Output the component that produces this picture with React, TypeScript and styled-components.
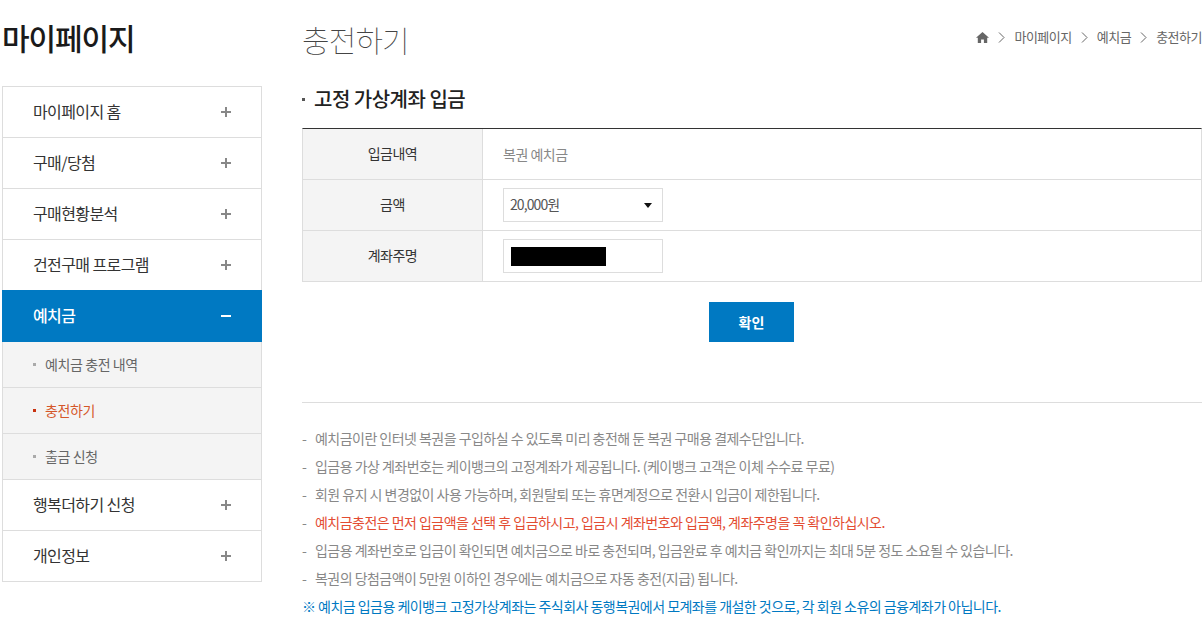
import React from "react";
import styled, { createGlobalStyle } from "styled-components";

const menuBefore = ["마이페이지 홈", "구매/당첨", "구매현황분석", "건전구매 프로그램"];
const menuAfter = ["행복더하기 신청", "개인정보"];

const notes = [
  { text: "예치금이란 인터넷 복권을 구입하실 수 있도록 미리 충전해 둔 복권 구매용 결제수단입니다." },
  { text: "입금용 가상 계좌번호는 케이뱅크의 고정계좌가 제공됩니다. (케이뱅크 고객은 이체 수수료 무료)" },
  { text: "회원 유지 시 변경없이 사용 가능하며, 회원탈퇴 또는 휴면계정으로 전환시 입금이 제한됩니다." },
  { text: "예치금충전은 먼저 입금액을 선택 후 입금하시고, 입금시 계좌번호와 입금액, 계좌주명을 꼭 확인하십시오.", warn: true },
  { text: "입금용 계좌번호로 입금이 확인되면 예치금으로 바로 충전되며, 입금완료 후 예치금 확인까지는 최대 5분 정도 소요될 수 있습니다." },
  { text: "복권의 당첨금액이 5만원 이하인 경우에는 예치금으로 자동 충전(지급) 됩니다." },
];

function Chevron() {
  return (
    <CrumbArrow width="7" height="11" viewBox="0 0 7 11">
      <path d="M1 0.5 L6 5.5 L1 10.5" fill="none" stroke="#666" strokeWidth="1" />
    </CrumbArrow>
  );
}

function App() {
  return (
    <>
      <GlobalStyle />
      <Page>
        <Sidebar>
          <SideTitle>마이페이지</SideTitle>
          <Menu>
            {menuBefore.map((m) => (
              <MenuItem key={m}>
                {m}
                <PlusIcon />
              </MenuItem>
            ))}
            <ActiveItem>
              예치금
              <Minus />
            </ActiveItem>
            <SubItem>예치금 충전 내역</SubItem>
            <SubItem $current>충전하기</SubItem>
            <SubItem>출금 신청</SubItem>
            {menuAfter.map((m) => (
              <MenuItem key={m}>
                {m}
                <PlusIcon />
              </MenuItem>
            ))}
          </Menu>
        </Sidebar>

        <Main>
          <TopRow>
            <PageTitle>충전하기</PageTitle>
            <Crumbs>
              <HomeIcon width="13" height="11" viewBox="0 0 13 11">
                <path d="M6.5 0 L13 5.8 L11.2 5.8 L11.2 11 L7.9 11 L7.9 7.4 L5.1 7.4 L5.1 11 L1.8 11 L1.8 5.8 L0 5.8 Z" fill="#666" />
              </HomeIcon>
              <Chevron />
              <span>마이페이지</span>
              <Chevron />
              <span>예치금</span>
              <Chevron />
              <span>충전하기</span>
            </Crumbs>
          </TopRow>

          <SectionTitle>고정 가상계좌 입금</SectionTitle>

          <FormTable>
            <Row>
              <Label>입금내역</Label>
              <Value>복권 예치금</Value>
            </Row>
            <Row>
              <Label>금액</Label>
              <Value>
                <SelectBox>
                  20,000원
                  <Caret />
                </SelectBox>
              </Value>
            </Row>
            <Row>
              <Label>계좌주명</Label>
              <Value>
                <InputBox>
                  <Redacted />
                </InputBox>
              </Value>
            </Row>
          </FormTable>

          <ButtonRow>
            <ConfirmButton type="button">확인</ConfirmButton>
          </ButtonRow>

          <Divider />

          <Notes>
            {notes.map((n) => (
              <Note key={n.text} $warn={n.warn}>
                {n.text}
              </Note>
            ))}
          </Notes>
          <BlueNote>※ 예치금 입금용 케이뱅크 고정가상계좌는 주식회사 동행복권에서 모계좌를 개설한 것으로, 각 회원 소유의 금융계좌가 아닙니다.</BlueNote>
        </Main>
      </Page>
    </>
  );
}

const GlobalStyle = createGlobalStyle`
  html, body {
    margin: 0;
    padding: 0;
    background: #fff;
    overflow: hidden;
  }
  body {
    font-family: "Noto Sans CJK KR", "Noto Sans", sans-serif;
    color: #333;
  }
`;

const Page = styled.div`
  display: flex;
  gap: 40px;
  width: 1200px;
  height: 627px;
  padding-left: 2px;
`;

const Sidebar = styled.aside`
  width: 260px;
  flex: none;
`;

const SideTitle = styled.h2`
  margin: 0;
  height: 86px;
  padding-top: 16px;
  box-sizing: border-box;
  font-size: 30px;
  line-height: 42px;
  font-weight: 500;
  letter-spacing: -1.1px;
  color: #1a1a1a;
`;

const Menu = styled.nav`
  border: 1px solid #ddd;
  border-bottom: 0;
  display: flex;
  flex-direction: column;
`;

const MenuItem = styled.div`
  height: 51px;
  box-sizing: border-box;
  border-bottom: 1px solid #ddd;
  padding: 0 30px 2px;
  display: flex;
  align-items: center;
  justify-content: space-between;
  font-size: 16px;
  letter-spacing: -0.6px;
  color: #333;
`;

const PlusIcon = styled.i`
  width: 10px;
  height: 10px;
  margin-top: 2px;
  background:
    linear-gradient(#888, #888) center / 10px 2px no-repeat,
    linear-gradient(#888, #888) center / 2px 10px no-repeat;
`;

const ActiveItem = styled.div`
  height: 52px;
  margin: -1px -1px 0;
  box-sizing: border-box;
  padding: 0 31px 2px;
  display: flex;
  align-items: center;
  justify-content: space-between;
  background: #0079c2;
  color: #fff;
  font-size: 16px;
  font-weight: 500;
  letter-spacing: -0.6px;
`;

const Minus = styled.i`
  width: 10px;
  height: 2px;
  margin-top: 2px;
  background: #fff;
`;

const SubItem = styled.div<{ $current?: boolean }>`
  height: 46px;
  box-sizing: border-box;
  border-bottom: 1px solid #ddd;
  background: #f4f4f4;
  padding: 0 0 2px 30px;
  display: flex;
  align-items: center;
  gap: 9px;
  font-size: 14px;
  letter-spacing: -0.4px;
  color: ${(p) => (p.$current ? "#d4572a" : "#666")};

  &::before {
    content: "";
    width: 3px;
    height: 3px;
    margin-top: 2px;
    background: ${(p) => (p.$current ? "#c8320f" : "#aaa")};
  }
`;

const Main = styled.main`
  width: 900px;
  flex: none;
`;

const TopRow = styled.div`
  display: flex;
  justify-content: space-between;
  height: 83px;
`;

const PageTitle = styled.h1`
  margin: 0;
  padding-top: 17px;
  font-size: 30px;
  line-height: 44px;
  font-weight: 100;
  letter-spacing: -0.9px;
  color: #444;
`;

const Crumbs = styled.div`
  display: flex;
  align-items: center;
  height: 74px;
  gap: 9px;
  font-size: 13px;
  letter-spacing: -0.5px;
  color: #666;

  span {
    margin-top: -2px;
  }
`;

const HomeIcon = styled.svg`
  flex: none;
`;

const CrumbArrow = styled.svg`
  flex: none;
`;

const SectionTitle = styled.h3`
  margin: 0;
  height: 45px;
  box-sizing: border-box;
  padding-left: 12px;
  position: relative;
  font-size: 20px;
  line-height: 32px;
  font-weight: 500;
  letter-spacing: -0.5px;
  color: #222;

  &::before {
    content: "";
    position: absolute;
    left: 0;
    top: 15px;
    width: 3px;
    height: 3px;
    background: #555;
  }
`;

const FormTable = styled.div`
  border-top: 1px solid #333;
  border-left: 1px solid #ddd;
  border-right: 1px solid #ddd;
`;

const Row = styled.div`
  display: flex;
  height: 51px;
  box-sizing: border-box;
  border-bottom: 1px solid #ddd;
`;

const Label = styled.div`
  width: 180px;
  flex: none;
  padding-bottom: 2px;
  box-sizing: border-box;
  display: flex;
  align-items: center;
  justify-content: center;
  background: #f4f4f4;
  border-right: 1px solid #ddd;
  font-size: 14px;
  letter-spacing: -0.5px;
  color: #333;
`;

const Value = styled.div`
  flex: 1;
  display: flex;
  align-items: center;
  padding-left: 20px;
  font-size: 14px;
  letter-spacing: -0.5px;
  color: #888;
`;

const SelectBox = styled.div`
  position: relative;
  width: 160px;
  height: 34px;
  box-sizing: border-box;
  border: 1px solid #ddd;
  padding: 0 0 2px 6px;
  display: flex;
  align-items: center;
  font-size: 14px;
  letter-spacing: -0.9px;
  color: #555;
`;

const Caret = styled.i`
  position: absolute;
  right: 10px;
  top: 14px;
  border-left: 4px solid transparent;
  border-right: 4px solid transparent;
  border-top: 5px solid #111;
`;

const InputBox = styled.div`
  width: 160px;
  height: 34px;
  box-sizing: border-box;
  border: 1px solid #ddd;
  padding: 7px;
`;

const Redacted = styled.div`
  width: 95px;
  height: 19px;
  background: #000;
`;

const ButtonRow = styled.div`
  display: flex;
  justify-content: center;
  padding: 20px 2px 0 0;
`;

const ConfirmButton = styled.button`
  width: 85px;
  height: 40px;
  border: 0;
  padding: 0 0 0 1px;
  background: #0079c2;
  color: #fff;
  font-family: inherit;
  font-size: 14px;
  font-weight: 700;
`;

const Divider = styled.hr`
  margin: 60px 0 0;
  border: 0;
  border-top: 1px solid #ddd;
`;

const Notes = styled.ul`
  list-style: none;
  margin: 21px 0 0;
  padding: 0;
`;

const Note = styled.li<{ $warn?: boolean }>`
  height: 28px;
  line-height: 28px;
  padding-left: 13px;
  position: relative;
  font-size: 14px;
  letter-spacing: -0.53px;
  white-space: nowrap;
  color: ${(p) => (p.$warn ? "#e34c32" : "#888")};

  &::before {
    content: "-";
    position: absolute;
    left: 0;
    color: #888;
  }
`;

const BlueNote = styled.p`
  margin: 0;
  height: 28px;
  line-height: 28px;
  font-size: 14px;
  font-weight: 400;
  letter-spacing: -0.53px;
  white-space: nowrap;
  color: #0079c2;
`;

export default App;
